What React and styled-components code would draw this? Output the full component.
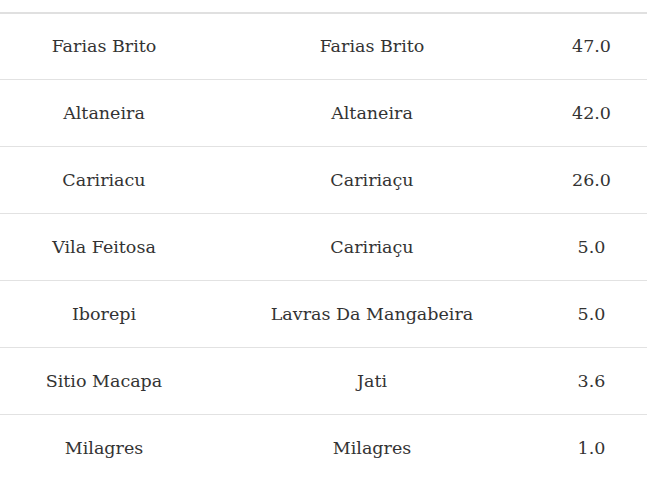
import React from "react";
import styled, {createGlobalStyle} from "styled-components";

const GlobalStyle = createGlobalStyle`
    body {
        margin: 0;
        background: #fff;
        font-family: "DejaVu Serif", serif;
    }
`

const Wrapper = styled.div`
    padding-top: 12px;
    width: 647px;
`

const Table = styled.table`
    width: 100%;
    border-collapse: collapse;
    border-top: 2px solid #e0e0e0;
    table-layout: fixed;
`

const Row = styled.tr`
    height: ${props => props.$first ? 66 : 67}px;
    border-top: ${props => props.$first ? "none" : "1px solid #e2e2e2"};
`

const Cell = styled.td`
    width: ${props => props.$width}px;
    padding: 0;
    text-align: center;
    vertical-align: middle;
    font-family: "DejaVu Serif", serif;
    font-size: 17.5px;
    color: #333;
`

const rows = [
    ["Farias Brito", "Farias Brito", "47.0"],
    ["Altaneira", "Altaneira", "42.0"],
    ["Caririacu", "Caririaçu", "26.0"],
    ["Vila Feitosa", "Caririaçu", "5.0"],
    ["Iborepi", "Lavras Da Mangabeira", "5.0"],
    ["Sitio Macapa", "Jati", "3.6"],
    ["Milagres", "Milagres", "1.0"],
];

const App = () => {
    return (
        <Wrapper>
            <GlobalStyle/>
            <Table>
                <tbody>
                {rows.map((row, i) =>
                    <Row key={i} $first={i === 0}>
                        <Cell $width={208}>{row[0]}</Cell>
                        <Cell $width={328}>{row[1]}</Cell>
                        <Cell $width={111}>{row[2]}</Cell>
                    </Row>)}
                </tbody>
            </Table>
        </Wrapper>
    );
}

export default App;
